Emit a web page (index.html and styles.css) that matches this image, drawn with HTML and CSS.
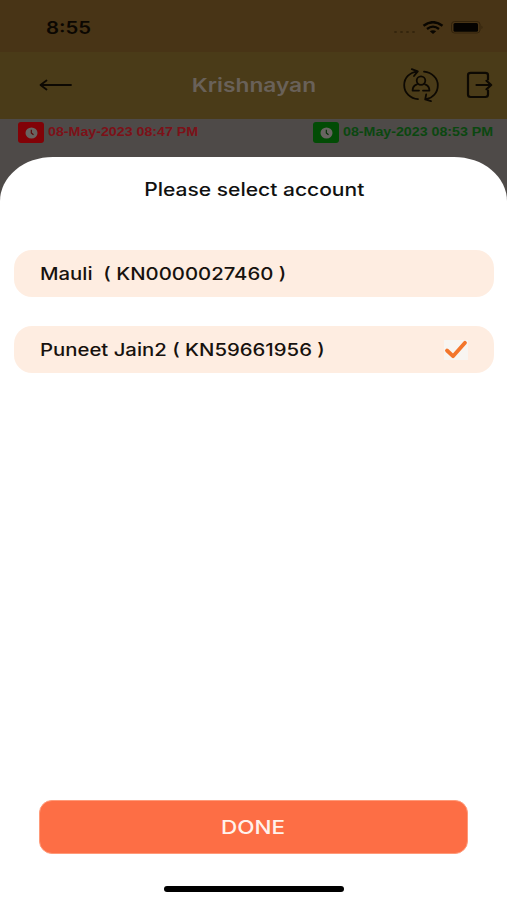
FILE: index.html
```html
<!DOCTYPE html>
<html lang="en">
<head>
    <meta charset="UTF-8">
    <meta name="viewport" content="width=device-width, initial-scale=1.0">
    <title>Select account</title>
    <link rel="stylesheet" href="styles.css">
</head>
<body>
    <div class="screen">
        <div class="status-bar">
            <span class="time wide">8:55</span>
            <div class="status-icons">
                <span class="signal"><i></i><i></i><i></i><i></i></span>
                <svg class="wifi" width="22" height="14" viewBox="0 0 22 14" fill="none" stroke="#090601">
                    <path d="M1.5 4.8Q11-2.5 20.5 4.8" stroke-width="2.4"/>
                    <path d="M5 8Q11 3.2 17 8" stroke-width="2.3"/>
                    <path d="M7.8 10.3Q11 8.2 14.2 10.3L11 13Z" fill="#090601" stroke="none"/>
                </svg>
                <svg class="battery" width="33" height="13" viewBox="0 0 33 13">
                    <rect x=".5" y=".5" width="28.5" height="11.5" rx="3" fill="none" stroke="#32230c"/>
                    <rect x="2.5" y="2" width="24.5" height="8.8" rx="1.5" fill="#050301"/>
                    <path d="M30.5 4.5q2 1.8 0 3.6z" fill="#32230c"/>
                </svg>
            </div>
        </div>

        <div class="header">
            <svg class="back" width="34" height="14" viewBox="0 0 34 14" fill="none" stroke="#0d0903" stroke-width="1.8" stroke-linecap="round" stroke-linejoin="round">
                <path d="M32 7H2M7.5 2.5L1.5 7l6 4.5"/>
            </svg>
            <h1 class="title"><span class="wide">Krishnayan</span></h1>
            <svg class="switch" width="38" height="36" viewBox="0 0 38 36" fill="none" stroke="#0d0903" stroke-width="1.8" stroke-linecap="round" stroke-linejoin="round">
                <path d="M16 32.2C8.5 31.5 2.2 26 2.2 18.2C2.2 10.8 7.5 5.5 15.2 4.6M9.8 2.2L15.8 4.4L12 9"/>
                <path d="M22 4.6C30 5.5 35.8 11 35.8 18.2C35.8 25.5 31 31 24 32.2M24.2 27.4L23.2 32.4L29 34.2"/>
                <circle cx="19" cy="13.6" r="4.3"/>
                <path d="M15 17.4C12 18.4 10.6 20.6 10.6 23.6H17M21 23.6H27.4C27.4 20.6 26 18.4 23 17.4"/>
            </svg>
            <svg class="logout" width="27" height="28" viewBox="0 0 27 28" fill="none" stroke="#0d0903" stroke-width="2.2" stroke-linecap="round" stroke-linejoin="round">
                <path d="M22 8.5V4.2Q22 1.8 19.3 1.8H4.7Q2 1.8 2 4.2V23.6Q2 26 4.7 26H19.3Q22 26 22 23.6V19.5"/>
                <path d="M10.5 14H25M20.5 9.8L25.2 14L20.5 18.2"/>
            </svg>
        </div>

        <div class="times">
            <div class="stamp stamp-in">
                <span class="badge"><svg width="13" height="12" viewBox="0 0 13 12"><ellipse cx="6.5" cy="6" rx="6" ry="5.6" fill="#686461"/><path d="M6.3 2.8V6l2.2 1.8" fill="none" stroke="#570405" stroke-width="1.1"/></svg></span>
                <span class="wide">08-May-2023 08:47 PM</span>
            </div>
            <div class="stamp stamp-out">
                <span class="badge"><svg width="13" height="12" viewBox="0 0 13 12"><ellipse cx="6.5" cy="6" rx="6" ry="5.6" fill="#686461"/><path d="M6.3 2.8V6l2.2 1.8" fill="none" stroke="#022e04" stroke-width="1.1"/></svg></span>
                <span class="wide">08-May-2023 08:53 PM</span>
            </div>
        </div>

        <div class="sheet">
            <h2 class="sheet-title"><span class="wide">Please select account</span></h2>
            <div class="account">
                <span class="wide">Mauli&nbsp; ( KN0000027460 )</span>
            </div>
            <div class="account">
                <span class="wide">Puneet Jain2 ( KN59661956 )</span>
                <span class="check">
                    <svg width="24" height="20" viewBox="0 0 24 20" fill="none" stroke="#f3762c" stroke-width="3.8" stroke-linecap="round" stroke-linejoin="round">
                        <path d="M3 10.5L9 16.2L21 2.8"/>
                    </svg>
                </span>
            </div>
            <button class="done"><span class="wide">DONE</span></button>
            <div class="home-bar"></div>
        </div>
    </div>
</body>
</html>
```

FILE: styles.css
```css
body {
    margin: 0;
    font-family: Inter, "Liberation Sans", sans-serif;
}

.screen {
    display: flex;
    flex-direction: column;
    height: 900px;
    background: #4e4a48;
    overflow: hidden;
}

.wide {
    display: inline-block;
    white-space: nowrap;
    transform: scaleX(1.195);
    transform-origin: left center;
}

.status-bar {
    display: flex;
    justify-content: space-between;
    align-items: center;
    height: 52px;
    box-sizing: border-box;
    padding: 3px 23px 0 46px;
    background: #483416;
}

.time {
    font-size: 17px;
    font-weight: 600;
    color: #0b0702;
}

.status-icons {
    display: flex;
    align-items: center;
}

.signal {
    display: flex;
    gap: 3px;
    margin: 9px 7px 0 0;
}

.signal i {
    width: 3px;
    height: 2px;
    border-radius: 50%;
    background: #33240d;
}

.battery {
    margin-left: 7px;
}

.header {
    display: flex;
    align-items: center;
    height: 67px;
    box-sizing: border-box;
    padding: 0 14px 2px 39px;
    background: #4a3b18;
}

.title {
    flex: 1;
    margin: 0;
    padding: 2px 0 0 32px;
    text-align: center;
    font-size: 19px;
    font-weight: 600;
    color: #696159;
}

.title .wide,
.sheet-title .wide,
.done .wide {
    transform-origin: center;
}

.logout {
    margin-left: 26px;
}

.times {
    display: flex;
    height: 38px;
    padding: 3px 0 0 18px;
}

.stamp {
    display: flex;
    flex-shrink: 0;
    align-items: center;
    width: 295px;
    height: 21px;
    gap: 4px;
    font-family: "Liberation Sans", Arial, sans-serif;
    font-size: 12px;
    font-weight: 700;
}

.stamp .wide {
    margin-top: -1px;
    transform: scaleX(1.185);
}

.badge {
    display: flex;
    align-items: center;
    justify-content: center;
    width: 26px;
    height: 21px;
    border-radius: 3px;
}

.stamp-in {
    color: #7c1118;
}

.stamp-in .badge {
    background: #820207;
}

.stamp-out {
    color: #0b4710;
}

.stamp-out .badge {
    background: #024c05;
}

.sheet {
    display: flex;
    flex-direction: column;
    flex: 1;
    margin-top: -3px;
    padding: 0 13px 0 14px;
    border-radius: 53px 53px 0 0 / 44px 44px 0 0;
    background: #fff;
}

.sheet-title {
    height: 64px;
    margin: 0 0 29px;
    line-height: 66px;
    text-align: center;
    font-size: 18px;
    font-weight: 500;
    color: #111;
}

.sheet-title .wide {
    transform: scaleX(1.168);
}

.account {
    display: flex;
    align-items: center;
    justify-content: space-between;
    height: 47px;
    box-sizing: border-box;
    margin-bottom: 29px;
    padding: 0 26px;
    border-radius: 18px;
    background: #feede1;
    font-size: 17px;
    font-weight: 500;
    color: #17120e;
}

.check {
    display: flex;
    width: 24px;
    height: 20px;
    background: #f8f5f1;
}

.done {
    height: 54px;
    margin: auto 26px 32px 25px;
    padding: 0;
    border: 1px solid #ff9a79;
    border-radius: 13px;
    background: #fd6e45;
    color: #fff2ec;
    font-family: inherit;
    font-size: 19px;
    font-weight: 500;
}

.done .wide {
    transform: scaleX(1.185);
}

.home-bar {
    width: 180px;
    height: 6px;
    margin: 0 auto 8px;
    border-radius: 3px;
    background: #000;
}
```
